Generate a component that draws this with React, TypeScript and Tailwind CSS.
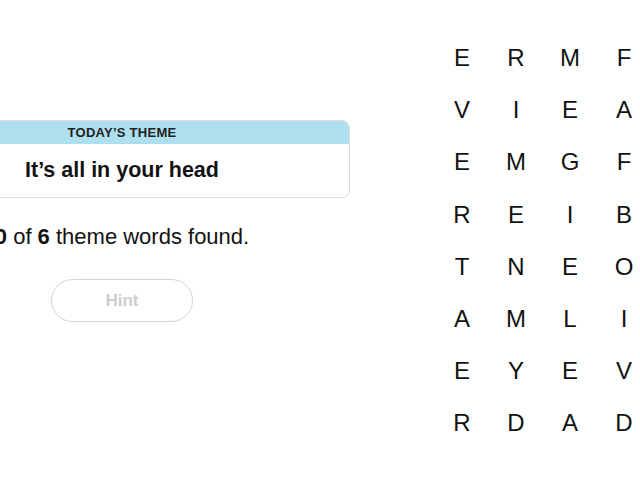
const letters = [
  ["E", "R", "M", "F"],
  ["V", "I", "E", "A"],
  ["E", "M", "G", "F"],
  ["R", "E", "I", "B"],
  ["T", "N", "E", "O"],
  ["A", "M", "L", "I"],
  ["E", "Y", "E", "V"],
  ["R", "D", "A", "D"],
];

export default function App() {
  return (
    <div className="w-[640px] h-[480px] bg-white overflow-hidden flex font-['Liberation_Sans',sans-serif] text-[#121212]">
      {/* left info panel, partly scrolled out of view */}
      <div className="w-[456px] shrink-0 -ml-[106px] pt-[120px] flex flex-col items-center">
        <div className="w-full rounded-lg border border-[#dcdcdc] overflow-hidden">
          <div className="h-[23px] bg-[#aedfee] flex items-center justify-center text-[13px] font-bold tracking-[0.02em] text-[#222]">
            TODAY’S THEME
          </div>
          <div className="h-[53px] flex items-center justify-center text-[21.5px] font-bold">
            It’s all in your head
          </div>
        </div>
        <p className="mt-[28px] text-[22px] leading-none">
          <b>0</b> of <b>6</b> theme words found.
        </p>
        <button className="mt-[31px] w-[142px] h-[43px] rounded-full border border-[#d4d4d4] text-[17px] font-bold text-[#cdcdcd]">
          Hint
        </button>
      </div>

      {/* letter board */}
      <div className="ml-[85px] pt-[32px] grid grid-cols-[repeat(4,54px)] auto-rows-[52.2px] shrink-0">
        {letters.flat().map((l, i) => (
          <div key={i} className="flex items-center justify-center text-[24px] leading-none">
            {l}
          </div>
        ))}
      </div>
    </div>
  );
}
